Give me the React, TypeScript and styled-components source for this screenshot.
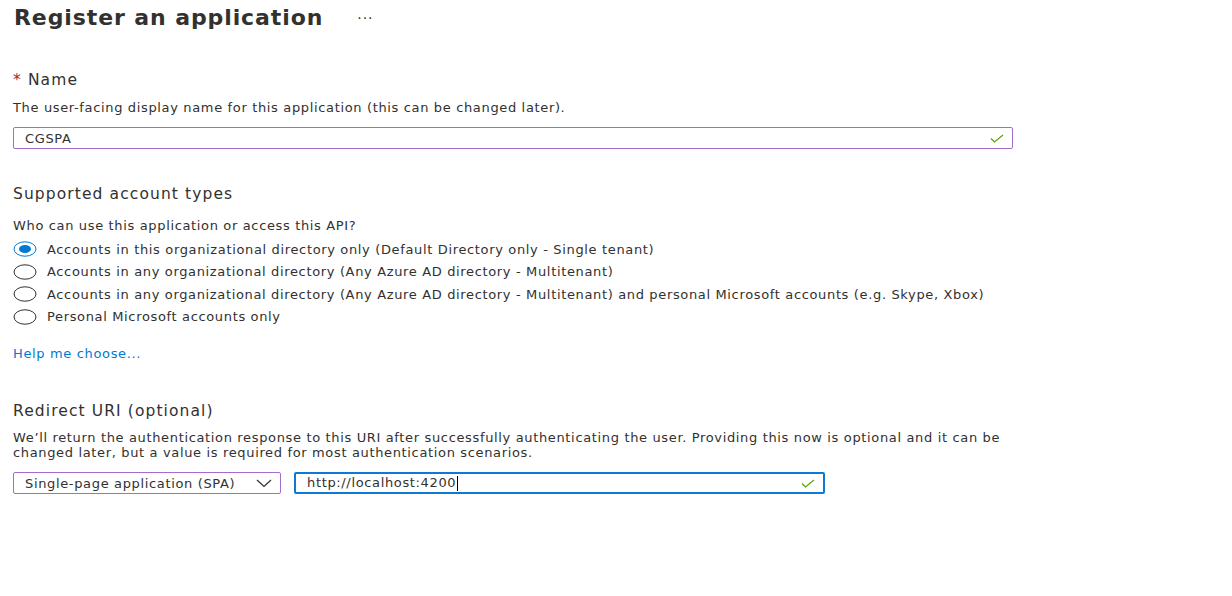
import React from 'react';
import styled, { createGlobalStyle } from 'styled-components';

const GlobalStyle = createGlobalStyle`
  body {
    margin: 0;
    background: #ffffff;
    font-family: 'DejaVu Sans', 'Noto Sans', sans-serif;
    color: #323130;
  }
`;

const accountTypes = [
  'Accounts in this organizational directory only (Default Directory only - Single tenant)',
  'Accounts in any organizational directory (Any Azure AD directory - Multitenant)',
  'Accounts in any organizational directory (Any Azure AD directory - Multitenant) and personal Microsoft accounts (e.g. Skype, Xbox)',
  'Personal Microsoft accounts only',
];

const CheckMark = () => (
  <svg width="14" height="9" viewBox="0 0 14 9">
    <path d="M1 4.5 L4.5 8 L13 1" fill="none" stroke="#57a300" strokeWidth="1.2" />
  </svg>
);

const Radio: React.FC<{ checked?: boolean }> = ({ checked }) => (
  <svg width="24" height="16" viewBox="0 0 24 16">
    <ellipse
      cx="12"
      cy="8"
      rx="11"
      ry="7.2"
      fill="none"
      stroke={checked ? '#0078d4' : '#323130'}
      strokeWidth="1"
    />
    {checked && <ellipse cx="12" cy="8" rx="6" ry="4" fill="#0078d4" />}
  </svg>
);

const App: React.FC = () => {
  return (
    <>
      <GlobalStyle />
      <Page>
        <TitleRow>
          <Title>Register an application</Title>
          <More>···</More>
        </TitleRow>

        <Section $top={36}>
          <Label>
            <Required>*</Required> Name
          </Label>
          <Help $gap={10}>The user-facing display name for this application (this can be changed later).</Help>
          <TextBox $width={1000} $variant="purple">
            <span>CGSPA</span>
            <CheckMark />
          </TextBox>
        </Section>

        <Section $top={35}>
          <Label>Supported account types</Label>
          <Help $gap={14}>Who can use this application or access this API?</Help>
          <RadioList>
            {accountTypes.map((t, i) => (
              <RadioRow key={t}>
                <Radio checked={i === 0} />
                <RadioText>{t}</RadioText>
              </RadioRow>
            ))}
          </RadioList>
          <Link>Help me choose...</Link>
        </Section>

        <Section $top={40}>
          <Label>Redirect URI (optional)</Label>
          <Help $gap={9}>
            We’ll return the authentication response to this URI after successfully authenticating the user. Providing this now is optional and it can be
            <br />
            changed later, but a value is required for most authentication scenarios.
          </Help>
          <InputRow>
            <TextBox $width={268} $variant="purple">
              <span>Single-page application (SPA)</span>
              <svg width="16" height="9" viewBox="0 0 16 9">
                <path d="M1 1 L8 7.5 L15 1" fill="none" stroke="#323130" strokeWidth="1.2" />
              </svg>
            </TextBox>
            <TextBox $width={531} $variant="blue">
              <span>
                http://localhost:4200<Caret />
              </span>
              <CheckMark />
            </TextBox>
          </InputRow>
        </Section>
      </Page>
    </>
  );
};

const Page = styled.div`
  padding: 0 13px;
  width: 1232px;
  height: 596px;
  box-sizing: border-box;
  overflow: hidden;
`;

const TitleRow = styled.div`
  display: flex;
  align-items: center;
  height: 34px;
  gap: 34px;
`;

const Title = styled.h1`
  margin: 0 0 0 1px;
  font-size: 22px;
  font-weight: 600;
  letter-spacing: 0.9px;
  color: #323130;
`;

const More = styled.span`
  font-size: 14px;
  color: #323130;
  letter-spacing: 1px;
  padding-top: 2px;
`;

const Section = styled.section<{ $top: number }>`
  margin-top: ${(p) => p.$top}px;
  display: flex;
  flex-direction: column;
`;

const Label = styled.div`
  font-size: 15.5px;
  line-height: 20px;
  letter-spacing: 1.1px;
  color: #323130;
`;

const Required = styled.span`
  color: #a4262c;
`;

const Help = styled.div<{ $gap?: number }>`
  margin-top: ${(p) => p.$gap ?? 6}px;
  font-size: 13px;
  line-height: 15px;
  color: #323130;
  letter-spacing: 0.65px;
`;

const TextBox = styled.div<{ $width: number; $variant: 'purple' | 'blue' }>`
  margin-top: 12px;
  width: ${(p) => p.$width}px;
  height: 22px;
  box-sizing: border-box;
  display: flex;
  align-items: center;
  justify-content: space-between;
  padding: 0 8px 0 11px;
  border: ${(p) => (p.$variant === 'blue' ? '2px solid #0f78d4' : '1px solid #a56ccf')};
  border-radius: 2px;
  font-size: 13px;
  letter-spacing: 0.65px;
  color: #323130;
`;

const Caret = styled.span`
  display: inline-block;
  width: 1px;
  height: 15px;
  background: #000;
  vertical-align: middle;
  margin-left: 1px;
`;

const RadioList = styled.div`
  margin-top: 5px;
  display: flex;
  flex-direction: column;
`;

const RadioRow = styled.div`
  display: flex;
  align-items: center;
  gap: 10px;
  height: 22.5px;
`;

const RadioText = styled.span`
  font-size: 13px;
  letter-spacing: 0.65px;
`;

const Link = styled.a`
  margin-top: 18px;
  font-size: 13px;
  letter-spacing: 0.65px;
  color: #0078d4;
  cursor: pointer;
`;

const InputRow = styled.div`
  display: flex;
  gap: 13px;
  margin-top: 12px;

  & > div {
    margin-top: 0;
  }
`;

export default App;
